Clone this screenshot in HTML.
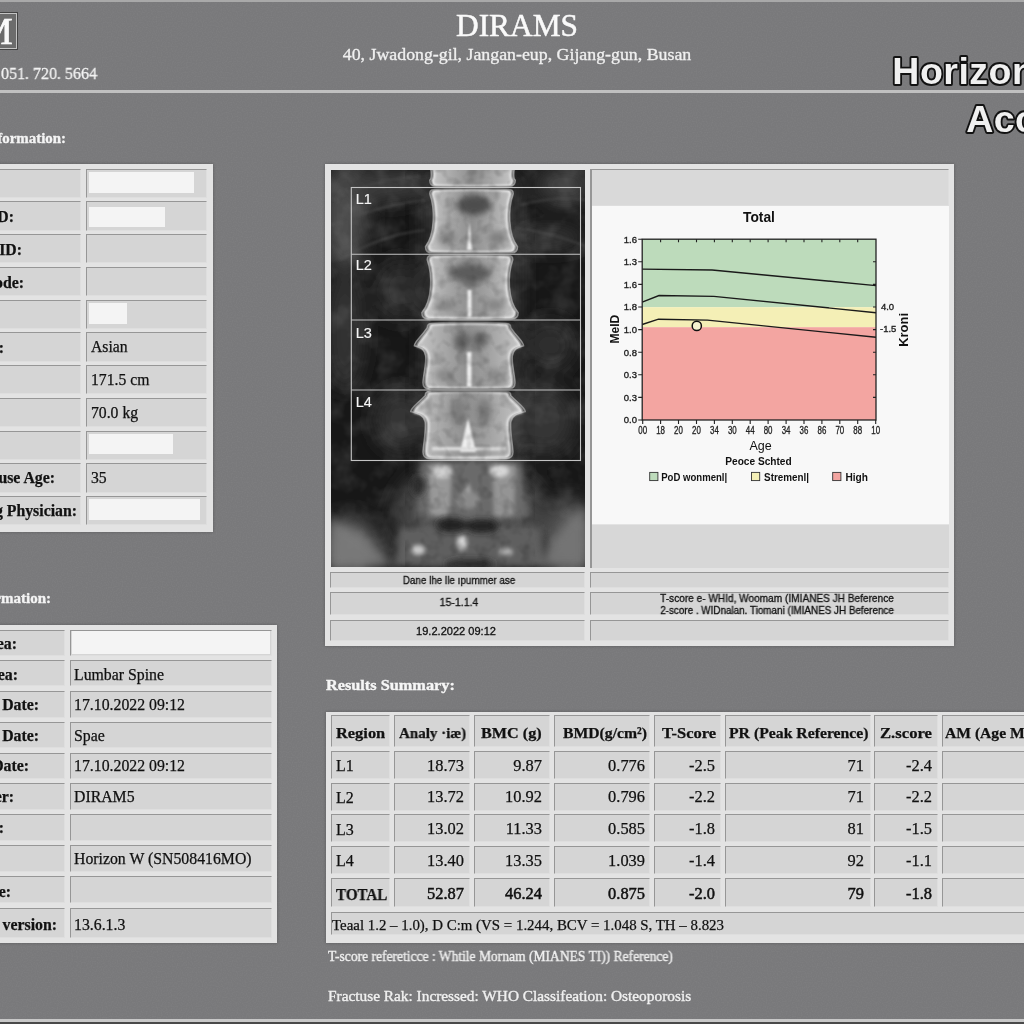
<!DOCTYPE html><html><head><meta charset="utf-8"><style>html,body{margin:0;padding:0}body{width:1024px;height:1024px;overflow:hidden;position:relative;background:#79797b}.t{will-change:transform}</style></head><body>
<svg style="position:absolute;left:0;top:0" width="1024" height="1024"><filter id="pn" x="0" y="0" width="100%" height="100%"><feTurbulence type="fractalNoise" baseFrequency="0.8" numOctaves="1" seed="11"/><feColorMatrix type="matrix" values="0 0 0 0 0.5  0 0 0 0 0.5  0 0 0 0 0.5  0 0 0 0.9 -0.35"/></filter><rect width="1024" height="1024" filter="url(#pn)" opacity="0.2"/></svg>
<div style="position:absolute;left:0.00px;top:0.00px;width:1024.00px;height:1.50px;background:#a9a9a9"></div>
<div style="position:absolute;left:0.00px;top:1019.00px;width:1024.00px;height:2.50px;background:#c8c8c8"></div>
<div style="position:absolute;left:0.00px;top:1021.50px;width:1024.00px;height:2.50px;background:#4a4a4a"></div>
<div style="position:absolute;left:0.00px;top:90.30px;width:1024.00px;height:2.70px;background:#c0c0c0"></div>
<div style="position:absolute;left:-22px;top:12px;width:40px;height:38px;box-sizing:border-box;border:1px solid #444;background:#6c6c6c"></div>
<div style="position:absolute;left:-21px;top:13px;width:38px;height:36px;box-sizing:border-box;border:1.3px solid #c4c4c4"></div>
<div class="t" style="position:absolute;left:-21.50px;top:12.18px;width:1200px;white-space:nowrap;line-height:38px;font-size:38px;font-family:'Liberation Serif', serif;font-weight:400;color:#fafafa;text-align:left;-webkit-text-stroke:0.7px #fafafa;">M</div>
<div class="t" style="position:absolute;left:1.00px;top:65.77px;width:1200px;white-space:nowrap;line-height:16.4px;font-size:16.4px;font-family:'Liberation Serif', serif;font-weight:400;color:#f2f2f2;text-align:left;transform:scaleX(0.9755);transform-origin:0 0;-webkit-text-stroke:0.3px #f2f2f2;">051. 720. 5664</div>
<div class="t" style="position:absolute;left:-83.00px;top:9.89px;width:1200px;white-space:nowrap;line-height:31.3px;font-size:31.3px;font-family:'Liberation Serif', serif;font-weight:400;color:#fafafa;text-align:center;transform:scaleX(1.0021);transform-origin:50% 0;-webkit-text-stroke:0.5px #fafafa;">DIRAMS</div>
<div class="t" style="position:absolute;left:-82.70px;top:47.05px;width:1200px;white-space:nowrap;line-height:16.3px;font-size:16.3px;font-family:'Liberation Serif', serif;font-weight:400;color:#f0f0f0;text-align:center;transform:scaleX(1.0946);transform-origin:50% 0;-webkit-text-stroke:0.3px #f0f0f0;">40, Jwadong-gil, Jangan-eup, Gijang-gun, Busan</div>
<svg style="position:absolute;left:0;top:0" width="1024" height="160" viewBox="0 0 1024 160"><g font-family="Liberation Sans, sans-serif" font-weight="700" fill="#f0f0f0" stroke="#121212" stroke-width="3.8" paint-order="stroke" stroke-linejoin="round"><text x="892.3" y="83.5" font-size="37.5" letter-spacing="0.5">Horizon</text><text x="966.2" y="131.5" font-size="37.5" letter-spacing="0.5">Acc</text></g></svg>
<div class="t" style="position:absolute;left:-1134.40px;top:130.52px;width:1200px;white-space:nowrap;line-height:14.9px;font-size:14.9px;font-family:'Liberation Serif', serif;font-weight:700;color:#f4f4f4;text-align:right;-webkit-text-stroke:0.35px #f4f4f4;">Information:</div>
<div class="t" style="position:absolute;left:-1148.70px;top:591.34px;width:1200px;white-space:nowrap;line-height:15px;font-size:15px;font-family:'Liberation Serif', serif;font-weight:700;color:#f4f4f4;text-align:right;-webkit-text-stroke:0.35px #f4f4f4;">Information:</div>
<div style="position:absolute;left:-10.00px;top:164.00px;width:222.80px;height:368.00px;background:#e3e3e3;box-shadow:0 0 3px rgba(0,0,0,0.25)"></div>
<div style="position:absolute;left:-10.00px;top:168.60px;width:91.00px;height:29.20px;background:#d5d5d5;box-sizing:border-box;border-top:1.5px solid #969696;border-left:1.5px solid #969696;border-bottom:1px solid #dedede;border-right:1px solid #dedede"></div>
<div style="position:absolute;left:86.00px;top:168.60px;width:121.20px;height:29.20px;background:#d5d5d5;box-sizing:border-box;border-top:1.5px solid #969696;border-left:1.5px solid #969696;border-bottom:1px solid #dedede;border-right:1px solid #dedede"></div>
<div style="position:absolute;left:-10.00px;top:201.35px;width:91.00px;height:29.20px;background:#d5d5d5;box-sizing:border-box;border-top:1.5px solid #969696;border-left:1.5px solid #969696;border-bottom:1px solid #dedede;border-right:1px solid #dedede"></div>
<div style="position:absolute;left:86.00px;top:201.35px;width:121.20px;height:29.20px;background:#d5d5d5;box-sizing:border-box;border-top:1.5px solid #969696;border-left:1.5px solid #969696;border-bottom:1px solid #dedede;border-right:1px solid #dedede"></div>
<div style="position:absolute;left:-10.00px;top:234.10px;width:91.00px;height:29.20px;background:#d5d5d5;box-sizing:border-box;border-top:1.5px solid #969696;border-left:1.5px solid #969696;border-bottom:1px solid #dedede;border-right:1px solid #dedede"></div>
<div style="position:absolute;left:86.00px;top:234.10px;width:121.20px;height:29.20px;background:#d5d5d5;box-sizing:border-box;border-top:1.5px solid #969696;border-left:1.5px solid #969696;border-bottom:1px solid #dedede;border-right:1px solid #dedede"></div>
<div style="position:absolute;left:-10.00px;top:266.85px;width:91.00px;height:29.20px;background:#d5d5d5;box-sizing:border-box;border-top:1.5px solid #969696;border-left:1.5px solid #969696;border-bottom:1px solid #dedede;border-right:1px solid #dedede"></div>
<div style="position:absolute;left:86.00px;top:266.85px;width:121.20px;height:29.20px;background:#d5d5d5;box-sizing:border-box;border-top:1.5px solid #969696;border-left:1.5px solid #969696;border-bottom:1px solid #dedede;border-right:1px solid #dedede"></div>
<div style="position:absolute;left:-10.00px;top:299.60px;width:91.00px;height:29.20px;background:#d5d5d5;box-sizing:border-box;border-top:1.5px solid #969696;border-left:1.5px solid #969696;border-bottom:1px solid #dedede;border-right:1px solid #dedede"></div>
<div style="position:absolute;left:86.00px;top:299.60px;width:121.20px;height:29.20px;background:#d5d5d5;box-sizing:border-box;border-top:1.5px solid #969696;border-left:1.5px solid #969696;border-bottom:1px solid #dedede;border-right:1px solid #dedede"></div>
<div style="position:absolute;left:-10.00px;top:332.35px;width:91.00px;height:29.20px;background:#d5d5d5;box-sizing:border-box;border-top:1.5px solid #969696;border-left:1.5px solid #969696;border-bottom:1px solid #dedede;border-right:1px solid #dedede"></div>
<div style="position:absolute;left:86.00px;top:332.35px;width:121.20px;height:29.20px;background:#d5d5d5;box-sizing:border-box;border-top:1.5px solid #969696;border-left:1.5px solid #969696;border-bottom:1px solid #dedede;border-right:1px solid #dedede"></div>
<div style="position:absolute;left:-10.00px;top:365.10px;width:91.00px;height:29.20px;background:#d5d5d5;box-sizing:border-box;border-top:1.5px solid #969696;border-left:1.5px solid #969696;border-bottom:1px solid #dedede;border-right:1px solid #dedede"></div>
<div style="position:absolute;left:86.00px;top:365.10px;width:121.20px;height:29.20px;background:#d5d5d5;box-sizing:border-box;border-top:1.5px solid #969696;border-left:1.5px solid #969696;border-bottom:1px solid #dedede;border-right:1px solid #dedede"></div>
<div style="position:absolute;left:-10.00px;top:397.85px;width:91.00px;height:29.20px;background:#d5d5d5;box-sizing:border-box;border-top:1.5px solid #969696;border-left:1.5px solid #969696;border-bottom:1px solid #dedede;border-right:1px solid #dedede"></div>
<div style="position:absolute;left:86.00px;top:397.85px;width:121.20px;height:29.20px;background:#d5d5d5;box-sizing:border-box;border-top:1.5px solid #969696;border-left:1.5px solid #969696;border-bottom:1px solid #dedede;border-right:1px solid #dedede"></div>
<div style="position:absolute;left:-10.00px;top:430.60px;width:91.00px;height:29.20px;background:#d5d5d5;box-sizing:border-box;border-top:1.5px solid #969696;border-left:1.5px solid #969696;border-bottom:1px solid #dedede;border-right:1px solid #dedede"></div>
<div style="position:absolute;left:86.00px;top:430.60px;width:121.20px;height:29.20px;background:#d5d5d5;box-sizing:border-box;border-top:1.5px solid #969696;border-left:1.5px solid #969696;border-bottom:1px solid #dedede;border-right:1px solid #dedede"></div>
<div style="position:absolute;left:-10.00px;top:463.35px;width:91.00px;height:29.20px;background:#d5d5d5;box-sizing:border-box;border-top:1.5px solid #969696;border-left:1.5px solid #969696;border-bottom:1px solid #dedede;border-right:1px solid #dedede"></div>
<div style="position:absolute;left:86.00px;top:463.35px;width:121.20px;height:29.20px;background:#d5d5d5;box-sizing:border-box;border-top:1.5px solid #969696;border-left:1.5px solid #969696;border-bottom:1px solid #dedede;border-right:1px solid #dedede"></div>
<div style="position:absolute;left:-10.00px;top:496.10px;width:91.00px;height:29.20px;background:#d5d5d5;box-sizing:border-box;border-top:1.5px solid #969696;border-left:1.5px solid #969696;border-bottom:1px solid #dedede;border-right:1px solid #dedede"></div>
<div style="position:absolute;left:86.00px;top:496.10px;width:121.20px;height:29.20px;background:#d5d5d5;box-sizing:border-box;border-top:1.5px solid #969696;border-left:1.5px solid #969696;border-bottom:1px solid #dedede;border-right:1px solid #dedede"></div>
<div style="position:absolute;left:89.00px;top:172.00px;width:104.70px;height:20.80px;background:#f4f4f4"></div>
<div style="position:absolute;left:89.00px;top:206.90px;width:75.80px;height:20.40px;background:#f4f4f4"></div>
<div style="position:absolute;left:89.40px;top:303.30px;width:37.70px;height:20.50px;background:#f4f4f4"></div>
<div style="position:absolute;left:89.40px;top:433.70px;width:83.60px;height:20.40px;background:#f4f4f4"></div>
<div style="position:absolute;left:89.40px;top:499.30px;width:110.60px;height:20.50px;background:#f4f4f4"></div>
<div class="t" style="position:absolute;left:-1185.60px;top:209.47px;width:1200px;white-space:nowrap;line-height:15.8px;font-size:15.8px;font-family:'Liberation Serif', serif;font-weight:700;color:#111;text-align:right;-webkit-text-stroke:0.25px #111;">Patient ID:</div>
<div class="t" style="position:absolute;left:-1178.10px;top:242.07px;width:1200px;white-space:nowrap;line-height:15.8px;font-size:15.8px;font-family:'Liberation Serif', serif;font-weight:700;color:#111;text-align:right;-webkit-text-stroke:0.25px #111;">Other ID:</div>
<div class="t" style="position:absolute;left:-1176.25px;top:274.67px;width:1200px;white-space:nowrap;line-height:15.8px;font-size:15.8px;font-family:'Liberation Serif', serif;font-weight:700;color:#111;text-align:right;-webkit-text-stroke:0.25px #111;">Zip Code:</div>
<div class="t" style="position:absolute;left:-1196.50px;top:339.87px;width:1200px;white-space:nowrap;line-height:15.8px;font-size:15.8px;font-family:'Liberation Serif', serif;font-weight:700;color:#111;text-align:right;-webkit-text-stroke:0.25px #111;">Ethnicity:</div>
<div class="t" style="position:absolute;left:-1145.00px;top:470.27px;width:1200px;white-space:nowrap;line-height:15.8px;font-size:15.8px;font-family:'Liberation Serif', serif;font-weight:700;color:#111;text-align:right;-webkit-text-stroke:0.25px #111;">Menopause Age:</div>
<div class="t" style="position:absolute;left:-1123.00px;top:502.87px;width:1200px;white-space:nowrap;line-height:15.8px;font-size:15.8px;font-family:'Liberation Serif', serif;font-weight:700;color:#111;text-align:right;-webkit-text-stroke:0.25px #111;">Referring Physician:</div>
<div class="t" style="position:absolute;left:90.70px;top:339.45px;width:1200px;white-space:nowrap;line-height:15.7px;font-size:15.7px;font-family:'Liberation Serif', serif;font-weight:400;color:#111;text-align:left;-webkit-text-stroke:0.25px #111;">Asian</div>
<div class="t" style="position:absolute;left:90.70px;top:372.05px;width:1200px;white-space:nowrap;line-height:15.7px;font-size:15.7px;font-family:'Liberation Serif', serif;font-weight:400;color:#111;text-align:left;-webkit-text-stroke:0.25px #111;">171.5 cm</div>
<div class="t" style="position:absolute;left:90.70px;top:404.65px;width:1200px;white-space:nowrap;line-height:15.7px;font-size:15.7px;font-family:'Liberation Serif', serif;font-weight:400;color:#111;text-align:left;-webkit-text-stroke:0.25px #111;">70.0 kg</div>
<div class="t" style="position:absolute;left:90.70px;top:469.85px;width:1200px;white-space:nowrap;line-height:15.7px;font-size:15.7px;font-family:'Liberation Serif', serif;font-weight:400;color:#111;text-align:left;-webkit-text-stroke:0.25px #111;">35</div>
<div style="position:absolute;left:-10.00px;top:624.70px;width:286.70px;height:318.30px;background:#e3e3e3;box-shadow:0 0 3px rgba(0,0,0,0.25)"></div>
<div style="position:absolute;left:-10.00px;top:629.80px;width:75.00px;height:25.90px;background:#d5d5d5;box-sizing:border-box;border-top:1.5px solid #969696;border-left:1.5px solid #969696;border-bottom:1px solid #dedede;border-right:1px solid #dedede"></div>
<div style="position:absolute;left:70.00px;top:629.80px;width:201.50px;height:25.90px;background:#d5d5d5;box-sizing:border-box;border-top:1.5px solid #969696;border-left:1.5px solid #969696;border-bottom:1px solid #dedede;border-right:1px solid #dedede"></div>
<div style="position:absolute;left:-10.00px;top:660.20px;width:75.00px;height:26.20px;background:#d5d5d5;box-sizing:border-box;border-top:1.5px solid #969696;border-left:1.5px solid #969696;border-bottom:1px solid #dedede;border-right:1px solid #dedede"></div>
<div style="position:absolute;left:70.00px;top:660.20px;width:201.50px;height:26.20px;background:#d5d5d5;box-sizing:border-box;border-top:1.5px solid #969696;border-left:1.5px solid #969696;border-bottom:1px solid #dedede;border-right:1px solid #dedede"></div>
<div style="position:absolute;left:-10.00px;top:691.00px;width:75.00px;height:26.50px;background:#d5d5d5;box-sizing:border-box;border-top:1.5px solid #969696;border-left:1.5px solid #969696;border-bottom:1px solid #dedede;border-right:1px solid #dedede"></div>
<div style="position:absolute;left:70.00px;top:691.00px;width:201.50px;height:26.50px;background:#d5d5d5;box-sizing:border-box;border-top:1.5px solid #969696;border-left:1.5px solid #969696;border-bottom:1px solid #dedede;border-right:1px solid #dedede"></div>
<div style="position:absolute;left:-10.00px;top:721.80px;width:75.00px;height:26.50px;background:#d5d5d5;box-sizing:border-box;border-top:1.5px solid #969696;border-left:1.5px solid #969696;border-bottom:1px solid #dedede;border-right:1px solid #dedede"></div>
<div style="position:absolute;left:70.00px;top:721.80px;width:201.50px;height:26.50px;background:#d5d5d5;box-sizing:border-box;border-top:1.5px solid #969696;border-left:1.5px solid #969696;border-bottom:1px solid #dedede;border-right:1px solid #dedede"></div>
<div style="position:absolute;left:-10.00px;top:752.50px;width:75.00px;height:26.50px;background:#d5d5d5;box-sizing:border-box;border-top:1.5px solid #969696;border-left:1.5px solid #969696;border-bottom:1px solid #dedede;border-right:1px solid #dedede"></div>
<div style="position:absolute;left:70.00px;top:752.50px;width:201.50px;height:26.50px;background:#d5d5d5;box-sizing:border-box;border-top:1.5px solid #969696;border-left:1.5px solid #969696;border-bottom:1px solid #dedede;border-right:1px solid #dedede"></div>
<div style="position:absolute;left:-10.00px;top:783.20px;width:75.00px;height:26.40px;background:#d5d5d5;box-sizing:border-box;border-top:1.5px solid #969696;border-left:1.5px solid #969696;border-bottom:1px solid #dedede;border-right:1px solid #dedede"></div>
<div style="position:absolute;left:70.00px;top:783.20px;width:201.50px;height:26.40px;background:#d5d5d5;box-sizing:border-box;border-top:1.5px solid #969696;border-left:1.5px solid #969696;border-bottom:1px solid #dedede;border-right:1px solid #dedede"></div>
<div style="position:absolute;left:-10.00px;top:813.80px;width:75.00px;height:27.20px;background:#d5d5d5;box-sizing:border-box;border-top:1.5px solid #969696;border-left:1.5px solid #969696;border-bottom:1px solid #dedede;border-right:1px solid #dedede"></div>
<div style="position:absolute;left:70.00px;top:813.80px;width:201.50px;height:27.20px;background:#d5d5d5;box-sizing:border-box;border-top:1.5px solid #969696;border-left:1.5px solid #969696;border-bottom:1px solid #dedede;border-right:1px solid #dedede"></div>
<div style="position:absolute;left:-10.00px;top:845.30px;width:75.00px;height:26.30px;background:#d5d5d5;box-sizing:border-box;border-top:1.5px solid #969696;border-left:1.5px solid #969696;border-bottom:1px solid #dedede;border-right:1px solid #dedede"></div>
<div style="position:absolute;left:70.00px;top:845.30px;width:201.50px;height:26.30px;background:#d5d5d5;box-sizing:border-box;border-top:1.5px solid #969696;border-left:1.5px solid #969696;border-bottom:1px solid #dedede;border-right:1px solid #dedede"></div>
<div style="position:absolute;left:-10.00px;top:876.10px;width:75.00px;height:27.30px;background:#d5d5d5;box-sizing:border-box;border-top:1.5px solid #969696;border-left:1.5px solid #969696;border-bottom:1px solid #dedede;border-right:1px solid #dedede"></div>
<div style="position:absolute;left:70.00px;top:876.10px;width:201.50px;height:27.30px;background:#d5d5d5;box-sizing:border-box;border-top:1.5px solid #969696;border-left:1.5px solid #969696;border-bottom:1px solid #dedede;border-right:1px solid #dedede"></div>
<div style="position:absolute;left:-10.00px;top:907.70px;width:75.00px;height:30.10px;background:#d5d5d5;box-sizing:border-box;border-top:1.5px solid #969696;border-left:1.5px solid #969696;border-bottom:1px solid #dedede;border-right:1px solid #dedede"></div>
<div style="position:absolute;left:70.00px;top:907.70px;width:201.50px;height:30.10px;background:#d5d5d5;box-sizing:border-box;border-top:1.5px solid #969696;border-left:1.5px solid #969696;border-bottom:1px solid #dedede;border-right:1px solid #dedede"></div>
<div style="position:absolute;left:71.60px;top:630.80px;width:198.20px;height:23.70px;background:#f4f4f4"></div>
<div class="t" style="position:absolute;left:-1183.00px;top:635.57px;width:1200px;white-space:nowrap;line-height:15.8px;font-size:15.8px;font-family:'Liberation Serif', serif;font-weight:700;color:#111;text-align:right;-webkit-text-stroke:0.25px #111;">Scan Area:</div>
<div class="t" style="position:absolute;left:-1182.10px;top:666.52px;width:1200px;white-space:nowrap;line-height:15.8px;font-size:15.8px;font-family:'Liberation Serif', serif;font-weight:700;color:#111;text-align:right;-webkit-text-stroke:0.25px #111;">Sub Area:</div>
<div class="t" style="position:absolute;left:-1160.70px;top:697.27px;width:1200px;white-space:nowrap;line-height:15.8px;font-size:15.8px;font-family:'Liberation Serif', serif;font-weight:700;color:#111;text-align:right;-webkit-text-stroke:0.25px #111;">Scan Date:</div>
<div class="t" style="position:absolute;left:-1160.70px;top:728.07px;width:1200px;white-space:nowrap;line-height:15.8px;font-size:15.8px;font-family:'Liberation Serif', serif;font-weight:700;color:#111;text-align:right;-webkit-text-stroke:0.25px #111;">Analysis Date:</div>
<div class="t" style="position:absolute;left:-1171.40px;top:758.27px;width:1200px;white-space:nowrap;line-height:15.8px;font-size:15.8px;font-family:'Liberation Serif', serif;font-weight:700;color:#111;text-align:right;-webkit-text-stroke:0.25px #111;">Update Date:</div>
<div class="t" style="position:absolute;left:-1186.00px;top:789.17px;width:1200px;white-space:nowrap;line-height:15.8px;font-size:15.8px;font-family:'Liberation Serif', serif;font-weight:700;color:#111;text-align:right;-webkit-text-stroke:0.25px #111;">Technologer:</div>
<div class="t" style="position:absolute;left:-1196.00px;top:820.27px;width:1200px;white-space:nowrap;line-height:15.8px;font-size:15.8px;font-family:'Liberation Serif', serif;font-weight:700;color:#111;text-align:right;-webkit-text-stroke:0.25px #111;">Model:</div>
<div class="t" style="position:absolute;left:-1189.30px;top:884.27px;width:1200px;white-space:nowrap;line-height:15.8px;font-size:15.8px;font-family:'Liberation Serif', serif;font-weight:700;color:#111;text-align:right;-webkit-text-stroke:0.25px #111;">Technique:</div>
<div class="t" style="position:absolute;left:-1143.00px;top:917.07px;width:1200px;white-space:nowrap;line-height:15.8px;font-size:15.8px;font-family:'Liberation Serif', serif;font-weight:700;color:#111;text-align:right;-webkit-text-stroke:0.25px #111;">Software version:</div>
<div class="t" style="position:absolute;left:74.30px;top:666.52px;width:1200px;white-space:nowrap;line-height:15.8px;font-size:15.8px;font-family:'Liberation Serif', serif;font-weight:400;color:#111;text-align:left;-webkit-text-stroke:0.25px #111;">Lumbar Spine</div>
<div class="t" style="position:absolute;left:74.30px;top:697.27px;width:1200px;white-space:nowrap;line-height:15.8px;font-size:15.8px;font-family:'Liberation Serif', serif;font-weight:400;color:#111;text-align:left;-webkit-text-stroke:0.25px #111;">17.10.2022 09:12</div>
<div class="t" style="position:absolute;left:74.30px;top:728.07px;width:1200px;white-space:nowrap;line-height:15.8px;font-size:15.8px;font-family:'Liberation Serif', serif;font-weight:400;color:#111;text-align:left;-webkit-text-stroke:0.25px #111;">Spae</div>
<div class="t" style="position:absolute;left:74.30px;top:758.27px;width:1200px;white-space:nowrap;line-height:15.8px;font-size:15.8px;font-family:'Liberation Serif', serif;font-weight:400;color:#111;text-align:left;-webkit-text-stroke:0.25px #111;">17.10.2022 09:12</div>
<div class="t" style="position:absolute;left:74.30px;top:789.17px;width:1200px;white-space:nowrap;line-height:15.8px;font-size:15.8px;font-family:'Liberation Serif', serif;font-weight:400;color:#111;text-align:left;-webkit-text-stroke:0.25px #111;">DIRAM5</div>
<div class="t" style="position:absolute;left:74.30px;top:851.47px;width:1200px;white-space:nowrap;line-height:15.8px;font-size:15.8px;font-family:'Liberation Serif', serif;font-weight:400;color:#111;text-align:left;-webkit-text-stroke:0.25px #111;">Horizon W (SN508416MO)</div>
<div class="t" style="position:absolute;left:74.30px;top:917.07px;width:1200px;white-space:nowrap;line-height:15.8px;font-size:15.8px;font-family:'Liberation Serif', serif;font-weight:400;color:#111;text-align:left;-webkit-text-stroke:0.25px #111;">13.6.1.3</div>
<div style="position:absolute;left:325.00px;top:164.00px;width:628.80px;height:481.50px;background:#e3e3e3;box-shadow:0 0 3px rgba(0,0,0,0.25)"></div>
<svg style="position:absolute;left:331px;top:170px" width="254" height="396.7" viewBox="331 170 254 396.7"><defs><filter id="b06" x="-20%" y="-20%" width="140%" height="140%"><feGaussianBlur stdDeviation="0.6"/></filter><filter id="b1" x="-20%" y="-20%" width="140%" height="140%"><feGaussianBlur stdDeviation="1.2"/></filter><filter id="b3" x="-50%" y="-50%" width="200%" height="200%"><feGaussianBlur stdDeviation="3"/></filter><filter id="b2" x="-50%" y="-50%" width="200%" height="200%"><feGaussianBlur stdDeviation="2.2"/></filter><filter id="b5" x="-50%" y="-50%" width="200%" height="200%"><feGaussianBlur stdDeviation="5"/></filter><filter id="b10" x="-50%" y="-50%" width="200%" height="200%"><feGaussianBlur stdDeviation="10"/></filter><filter id="nz" x="0" y="0" width="100%" height="100%"><feTurbulence type="fractalNoise" baseFrequency="0.045" numOctaves="3" seed="7"/><feColorMatrix type="matrix" values="0 0 0 0 1  0 0 0 0 1  0 0 0 0 1  0.9 0 0 0 -0.38"/></filter><filter id="nz2" x="0" y="0" width="100%" height="100%"><feTurbulence type="fractalNoise" baseFrequency="0.09" numOctaves="2" seed="3"/><feColorMatrix type="matrix" values="0 0 0 0 0  0 0 0 0 0  0 0 0 0 0  1.0 0 0 0 -0.45"/></filter><linearGradient id="vg" x1="0" x2="1" y1="0" y2="0"><stop offset="0" stop-color="#c6c6c6"/><stop offset="0.25" stop-color="#a8a8a8"/><stop offset="0.5" stop-color="#8e8e8e"/><stop offset="0.75" stop-color="#a8a8a8"/><stop offset="1" stop-color="#c6c6c6"/></linearGradient></defs><rect x="331" y="170" width="254" height="397" fill="#171717"/><g filter="url(#b10)"><ellipse cx="345" cy="215" rx="22" ry="55" fill="#4e4e4e"/><ellipse cx="385" cy="185" rx="45" ry="16" fill="#3e3e3e"/><ellipse cx="345" cy="330" rx="18" ry="60" fill="#343434"/><ellipse cx="400" cy="290" rx="25" ry="30" fill="#2c2c2c"/><ellipse cx="565" cy="185" rx="30" ry="20" fill="#3c3c3c"/><ellipse cx="545" cy="238" rx="40" ry="8" fill="#444"/><ellipse cx="400" cy="420" rx="25" ry="30" fill="#343434"/><ellipse cx="545" cy="420" rx="30" ry="35" fill="#363636"/><ellipse cx="550" cy="345" rx="25" ry="25" fill="#2e2e2e"/><ellipse cx="350" cy="548" rx="28" ry="30" fill="#666"/><ellipse cx="570" cy="540" rx="25" ry="40" fill="#5a5a5a"/><ellipse cx="470" cy="515" rx="75" ry="55" fill="#4a4a4a"/><rect x="425" y="170" width="95" height="397" fill="#383838"/></g><g stroke="#4a4a4a" stroke-width="2.5" fill="none" filter="url(#b1)" opacity="0.5"><path d="M333,200 Q370,180 420,176"/><path d="M333,225 Q380,205 425,200"/><path d="M340,260 Q380,235 425,230"/><path d="M515,228 Q550,232 585,246"/><path d="M520,205 Q560,195 585,200"/></g><rect x="331" y="170" width="254" height="397" filter="url(#nz)" opacity="0.26"/><g filter="url(#b3)"><path d="M420,462 Q470,456 522,462 L528,518 Q470,526 416,518 Z" fill="#6a6a6a"/><path d="M400,528 Q470,516 540,528 L546,566 L394,566 Z" fill="#5e5e5e"/></g><g filter="url(#b2)"><path d="M428,466 Q440,462 452,466 L450,515 Q440,518 430,514 Z" fill="#989898"/><path d="M492,466 Q504,462 516,466 L514,514 Q504,518 494,515 Z" fill="#949494"/><ellipse cx="442" cy="472" rx="10" ry="6" fill="#d0d0d0"/><ellipse cx="499" cy="471" rx="10" ry="6" fill="#d8d8d8"/><path d="M463,505 L468,482 L474,505 Z" fill="#c8c8c8"/><ellipse cx="468" cy="500" rx="12" ry="9" fill="#8a8a8a"/><ellipse cx="418" cy="550" rx="7" ry="5" fill="#c8c8c8"/><ellipse cx="462" cy="543" rx="5" ry="8" fill="#d4d4d4"/><ellipse cx="506" cy="552" rx="7" ry="4" fill="#b4b4b4"/></g><g filter="url(#b3)"><ellipse cx="452" cy="525" rx="16" ry="7" fill="#202020"/><ellipse cx="482" cy="526" rx="16" ry="7" fill="#202020"/><ellipse cx="470" cy="564" rx="25" ry="5" fill="#2a2a2a"/><ellipse cx="418" cy="486" rx="6" ry="10" fill="#2a2a2a"/></g><g filter="url(#b5)" opacity="0.9"><path d="M331,520 Q360,530 395,566 L331,566Z" fill="#7a7a7a"/><path d="M585,505 Q555,530 540,566 L585,566Z" fill="#777"/></g><path d="M436.5,163 C462.5,161 482.5,161 508.5,163 Q512.5,163 512.5,167 C510.5,169.9 510.5,179.1 512.5,180 Q512.5,186 506.5,186 C482.5,187 462.5,187 438.5,186 Q432.5,186 432.5,180 C434.5,179.1 434.5,169.9 432.5,167 Q432.5,163 436.5,163Z" fill="url(#vg)" filter="url(#b06)"/><path d="M436.5,163 C462.5,161 482.5,161 508.5,163 Q512.5,163 512.5,167 C510.5,169.9 510.5,179.1 512.5,180 Q512.5,186 506.5,186 C482.5,187 462.5,187 438.5,186 Q432.5,186 432.5,180 C434.5,179.1 434.5,169.9 432.5,167 Q432.5,163 436.5,163Z" fill="none" stroke="#8c8c8c" stroke-width="1.4" transform="translate(472.5,174.5) scale(1.07,1.03) translate(-472.5,-174.5)" filter="url(#b06)"/><path d="M436.5,163 C462.5,161 482.5,161 508.5,163 Q512.5,163 512.5,167 C510.5,169.9 510.5,179.1 512.5,180 Q512.5,186 506.5,186 C482.5,187 462.5,187 438.5,186 Q432.5,186 432.5,180 C434.5,179.1 434.5,169.9 432.5,167 Q432.5,163 436.5,163Z" fill="none" stroke="#e4e4e4" stroke-width="2.8" filter="url(#b1)"/><path d="M436.5,190.5 C461.5,188.5 481.5,188.5 506.5,190.5 Q510.5,190.5 510.5,194.5 C505.5,208.95 505.5,233.55 514.5,246 Q514.5,252 508.5,252 C481.5,253 461.5,253 434.5,252 Q428.5,252 428.5,246 C437.5,233.55 437.5,208.95 432.5,194.5 Q432.5,190.5 436.5,190.5Z" fill="url(#vg)" filter="url(#b06)"/><path d="M436.5,190.5 C461.5,188.5 481.5,188.5 506.5,190.5 Q510.5,190.5 510.5,194.5 C505.5,208.95 505.5,233.55 514.5,246 Q514.5,252 508.5,252 C481.5,253 461.5,253 434.5,252 Q428.5,252 428.5,246 C437.5,233.55 437.5,208.95 432.5,194.5 Q432.5,190.5 436.5,190.5Z" fill="none" stroke="#8c8c8c" stroke-width="1.4" transform="translate(471.5,221.25) scale(1.07,1.03) translate(-471.5,-221.25)" filter="url(#b06)"/><path d="M436.5,190.5 C461.5,188.5 481.5,188.5 506.5,190.5 Q510.5,190.5 510.5,194.5 C505.5,208.95 505.5,233.55 514.5,246 Q514.5,252 508.5,252 C481.5,253 461.5,253 434.5,252 Q428.5,252 428.5,246 C437.5,233.55 437.5,208.95 432.5,194.5 Q432.5,190.5 436.5,190.5Z" fill="none" stroke="#e4e4e4" stroke-width="2.8" filter="url(#b1)"/><path d="M434,256.5 C460,254.5 480,254.5 506,256.5 Q510,256.5 510,260.5 C505,274.95 505,299.55 515,312 Q515,318 509,318 C480,319 460,319 431,318 Q425,318 425,312 C435,299.55 435,274.95 430,260.5 Q430,256.5 434,256.5Z" fill="url(#vg)" filter="url(#b06)"/><path d="M434,256.5 C460,254.5 480,254.5 506,256.5 Q510,256.5 510,260.5 C505,274.95 505,299.55 515,312 Q515,318 509,318 C480,319 460,319 431,318 Q425,318 425,312 C435,299.55 435,274.95 430,260.5 Q430,256.5 434,256.5Z" fill="none" stroke="#8c8c8c" stroke-width="1.4" transform="translate(470,287.25) scale(1.07,1.03) translate(-470,-287.25)" filter="url(#b06)"/><path d="M434,256.5 C460,254.5 480,254.5 506,256.5 Q510,256.5 510,260.5 C505,274.95 505,299.55 515,312 Q515,318 509,318 C480,319 460,319 431,318 Q425,318 425,312 C435,299.55 435,274.95 430,260.5 Q430,256.5 434,256.5Z" fill="none" stroke="#e4e4e4" stroke-width="2.8" filter="url(#b1)"/><path d="M434,324.4 C459,322.4 479,322.4 504,324.4 Q508,324.4 508,328.4 C514.0,338 520,342 520,346 C512.8,348 510.5,350 509.5,356 C508.5,362.2 512,376 512,382 Q512,388 506,388 C479,389 459,389 432,388 Q426,388 426,382 C426,376 429.5,362.2 428.5,356 C427.5,350 425.2,348 418,346 C418,342 424.0,338 430,328.4 Q430,324.4 434,324.4Z" fill="url(#vg)" filter="url(#b06)"/><path d="M434,324.4 C459,322.4 479,322.4 504,324.4 Q508,324.4 508,328.4 C514.0,338 520,342 520,346 C512.8,348 510.5,350 509.5,356 C508.5,362.2 512,376 512,382 Q512,388 506,388 C479,389 459,389 432,388 Q426,388 426,382 C426,376 429.5,362.2 428.5,356 C427.5,350 425.2,348 418,346 C418,342 424.0,338 430,328.4 Q430,324.4 434,324.4Z" fill="none" stroke="#8c8c8c" stroke-width="1.4" transform="translate(469,356.2) scale(1.07,1.03) translate(-469,-356.2)" filter="url(#b06)"/><path d="M434,324.4 C459,322.4 479,322.4 504,324.4 Q508,324.4 508,328.4 C514.0,338 520,342 520,346 C512.8,348 510.5,350 509.5,356 C508.5,362.2 512,376 512,382 Q512,388 506,388 C479,389 459,389 432,388 Q426,388 426,382 C426,376 429.5,362.2 428.5,356 C427.5,350 425.2,348 418,346 C418,342 424.0,338 430,328.4 Q430,324.4 434,324.4Z" fill="none" stroke="#e4e4e4" stroke-width="2.8" filter="url(#b1)"/><path d="M432,392.5 C458,390.5 478,390.5 504,392.5 Q508,392.5 508,396.5 C514.75,404 521.5,408 521.5,412 C513.4,414 509,416 508,422 C507,431.0 510,445.5 510,451.5 Q510,457.5 504,457.5 C478,458.5 458,458.5 432,457.5 Q426,457.5 426,451.5 C426,445.5 429,431.0 428,422 C427,416 422.6,414 414.5,412 C414.5,408 421.25,404 428,396.5 Q428,392.5 432,392.5Z" fill="url(#vg)" filter="url(#b06)"/><path d="M432,392.5 C458,390.5 478,390.5 504,392.5 Q508,392.5 508,396.5 C514.75,404 521.5,408 521.5,412 C513.4,414 509,416 508,422 C507,431.0 510,445.5 510,451.5 Q510,457.5 504,457.5 C478,458.5 458,458.5 432,457.5 Q426,457.5 426,451.5 C426,445.5 429,431.0 428,422 C427,416 422.6,414 414.5,412 C414.5,408 421.25,404 428,396.5 Q428,392.5 432,392.5Z" fill="none" stroke="#8c8c8c" stroke-width="1.4" transform="translate(468,425.0) scale(1.07,1.03) translate(-468,-425.0)" filter="url(#b06)"/><path d="M432,392.5 C458,390.5 478,390.5 504,392.5 Q508,392.5 508,396.5 C514.75,404 521.5,408 521.5,412 C513.4,414 509,416 508,422 C507,431.0 510,445.5 510,451.5 Q510,457.5 504,457.5 C478,458.5 458,458.5 432,457.5 Q426,457.5 426,451.5 C426,445.5 429,431.0 428,422 C427,416 422.6,414 414.5,412 C414.5,408 421.25,404 428,396.5 Q428,392.5 432,392.5Z" fill="none" stroke="#e4e4e4" stroke-width="2.8" filter="url(#b1)"/><g filter="url(#b3)"><ellipse cx="474" cy="205" rx="17" ry="10" fill="#4e4e4e"/><ellipse cx="470" cy="273" rx="21" ry="9" fill="#5c5c5c"/><ellipse cx="462" cy="341" rx="8" ry="9" fill="#5e5e5e"/><ellipse cx="480" cy="340" rx="7" ry="8" fill="#5e5e5e"/><ellipse cx="458" cy="412" rx="8" ry="14" fill="#7e7e7e"/><ellipse cx="484" cy="412" rx="8" ry="14" fill="#7e7e7e"/><ellipse cx="447" cy="238" rx="9" ry="7" fill="#808080"/><ellipse cx="497" cy="238" rx="9" ry="7" fill="#808080"/><ellipse cx="447" cy="305" rx="10" ry="6" fill="#858585"/><ellipse cx="495" cy="305" rx="10" ry="6" fill="#858585"/><ellipse cx="445" cy="375" rx="10" ry="6" fill="#888"/><ellipse cx="495" cy="375" rx="10" ry="6" fill="#888"/></g><g filter="url(#b1)" fill="#eeeeee"><path d="M467,250 L469.5,222 L472,250Z"/><rect x="467.5" y="290" width="4" height="27"/><rect x="467" y="352" width="4.5" height="35"/><path d="M460,452 L468,418 L476,452 Z"/><rect x="432" y="447" width="74" height="3.5" fill="#dcdcdc"/></g><rect x="405" y="170" width="130" height="397" filter="url(#nz2)" opacity="0.42"/><g fill="#161616" filter="url(#b1)" opacity="0.9"><rect x="430" y="187" width="84" height="2"/><rect x="430" y="253" width="84" height="2"/><rect x="430" y="320" width="84" height="2.5"/><rect x="430" y="389" width="84" height="2.5"/></g><g fill="none" stroke="#c4c4c4" stroke-width="1.1"><rect x="351.3" y="187.5" width="229.2" height="273"/><path d="M351.3,254.2H580.5 M351.3,320H580.5 M351.3,390H580.5"/></g><g font-family="Liberation Sans, sans-serif" font-size="14.5" fill="#f4f4f4" stroke="#f4f4f4" stroke-width="0.15"><text x="355.8" y="204.4">L1</text><text x="355.8" y="270.5">L2</text><text x="355.8" y="338">L3</text><text x="355.8" y="406.8">L4</text></g></svg>
<div style="position:absolute;left:590.00px;top:169.20px;width:359.00px;height:37.10px;background:#d9d9d9;box-sizing:border-box;border-top:1.5px solid #969696;border-left:1.5px solid #969696;border-bottom:1px solid #dedede;border-right:1px solid #dedede"></div>
<div style="position:absolute;left:591.50px;top:206.30px;width:357.50px;height:318.20px;background:#f8f8f8"></div>
<div style="position:absolute;left:591.50px;top:524.50px;width:357.50px;height:43.80px;background:#d7d7d7"></div>
<div style="position:absolute;left:590.00px;top:169.20px;width:1.50px;height:399.10px;background:#969696"></div>
<div style="position:absolute;left:330.00px;top:572.30px;width:255.00px;height:15.70px;background:#d5d5d5;box-sizing:border-box;border-top:1.5px solid #969696;border-left:1.5px solid #969696;border-bottom:1px solid #dedede;border-right:1px solid #dedede"></div>
<div style="position:absolute;left:590.00px;top:572.30px;width:359.00px;height:15.70px;background:#d5d5d5;box-sizing:border-box;border-top:1.5px solid #969696;border-left:1.5px solid #969696;border-bottom:1px solid #dedede;border-right:1px solid #dedede"></div>
<div style="position:absolute;left:330.00px;top:592.30px;width:255.00px;height:23.20px;background:#d5d5d5;box-sizing:border-box;border-top:1.5px solid #969696;border-left:1.5px solid #969696;border-bottom:1px solid #dedede;border-right:1px solid #dedede"></div>
<div style="position:absolute;left:590.00px;top:592.30px;width:359.00px;height:23.20px;background:#d5d5d5;box-sizing:border-box;border-top:1.5px solid #969696;border-left:1.5px solid #969696;border-bottom:1px solid #dedede;border-right:1px solid #dedede"></div>
<div style="position:absolute;left:330.00px;top:620.30px;width:255.00px;height:20.90px;background:#d5d5d5;box-sizing:border-box;border-top:1.5px solid #969696;border-left:1.5px solid #969696;border-bottom:1px solid #dedede;border-right:1px solid #dedede"></div>
<div style="position:absolute;left:590.00px;top:620.30px;width:359.00px;height:20.90px;background:#d5d5d5;box-sizing:border-box;border-top:1.5px solid #969696;border-left:1.5px solid #969696;border-bottom:1px solid #dedede;border-right:1px solid #dedede"></div>
<div class="t" style="position:absolute;left:-141.30px;top:575.31px;width:1200px;white-space:nowrap;line-height:10.5px;font-size:10.5px;font-family:'Liberation Sans', sans-serif;font-weight:400;color:#111;text-align:center;transform:scaleX(0.9398);transform-origin:50% 0;-webkit-text-stroke:0.3px #111;">Dane lhe lle ıpummer ase</div>
<div class="t" style="position:absolute;left:-140.60px;top:597.29px;width:1200px;white-space:nowrap;line-height:11px;font-size:11px;font-family:'Liberation Sans', sans-serif;font-weight:400;color:#111;text-align:center;transform:scaleX(0.9590);transform-origin:50% 0;-webkit-text-stroke:0.3px #111;">15-1.1.4</div>
<div class="t" style="position:absolute;left:-143.80px;top:625.69px;width:1200px;white-space:nowrap;line-height:11px;font-size:11px;font-family:'Liberation Sans', sans-serif;font-weight:400;color:#111;text-align:center;transform:scaleX(1.0047);transform-origin:50% 0;-webkit-text-stroke:0.3px #111;">19.2.2022 09:12</div>
<div class="t" style="position:absolute;left:176.70px;top:594.27px;width:1200px;white-space:nowrap;line-height:10.2px;font-size:10.2px;font-family:'Liberation Sans', sans-serif;font-weight:400;color:#111;text-align:center;transform:scaleX(0.9906);transform-origin:50% 0;-webkit-text-stroke:0.3px #111;">T-score e- WHId, Woomam (IMIANES JH Beference</div>
<div class="t" style="position:absolute;left:176.70px;top:605.97px;width:1200px;white-space:nowrap;line-height:10.2px;font-size:10.2px;font-family:'Liberation Sans', sans-serif;font-weight:400;color:#111;text-align:center;transform:scaleX(0.9687);transform-origin:50% 0;-webkit-text-stroke:0.3px #111;">2-score . WIDnalan. Tiomani (IMIANES JH Beference</div>
<svg style="position:absolute;left:591.5px;top:206.3px" width="357.5" height="318.2" viewBox="591.5 206.3 357.5 318.2"><rect x="641.7" y="239.5" width="233.79999999999995" height="68.0" fill="#bddbbb"/><rect x="641.7" y="307.5" width="233.79999999999995" height="20" fill="#f4efb6"/><rect x="641.7" y="327.5" width="233.79999999999995" height="92.80000000000001" fill="#f3a5a1"/><g fill="none" stroke="#1a1a1a" stroke-width="1.4"><polyline points="641.7,269.4 711.6,270.3 875.5,285.9"/><polyline points="641.7,302.5 658.5,295.8 713.4,296.7 875.5,313"/><polyline points="641.7,324.8 658,319.5 707,320.4 875.5,337.6"/></g><circle cx="696.3" cy="326.2" r="4.6" fill="#f6f2d0" stroke="#111" stroke-width="1.5"/><rect x="641.7" y="239.5" width="233.79999999999995" height="180.8" fill="none" stroke="#222" stroke-width="1.3"/><path d="M637.7,239.5H641.7 M637.7,262.1H641.7 M637.7,284.7H641.7 M637.7,307.3H641.7 M637.7,329.9H641.7 M637.7,352.5H641.7 M637.7,375.1H641.7 M637.7,397.7H641.7 M637.7,420.3H641.7 M872.5,262.1H875.5 M872.5,284.7H875.5 M872.5,307.3H875.5 M872.5,329.9H875.5 M872.5,352.5H875.5 M872.5,375.1H875.5 M872.5,397.7H875.5 M642.2,420.3V424.3 M660.1,420.3V424.3 M660.1,239.5V242.5 M678.0,420.3V424.3 M678.0,239.5V242.5 M696.0,420.3V424.3 M696.0,239.5V242.5 M713.9,420.3V424.3 M713.9,239.5V242.5 M731.8,420.3V424.3 M731.8,239.5V242.5 M749.7,420.3V424.3 M749.7,239.5V242.5 M767.6,420.3V424.3 M767.6,239.5V242.5 M785.6,420.3V424.3 M785.6,239.5V242.5 M803.5,420.3V424.3 M803.5,239.5V242.5 M821.4,420.3V424.3 M821.4,239.5V242.5 M839.3,420.3V424.3 M839.3,239.5V242.5 M857.2,420.3V424.3 M857.2,239.5V242.5 M875.2,420.3V424.3" stroke="#222" stroke-width="1.1" fill="none"/><g font-family="Liberation Sans, sans-serif" font-size="9.5" fill="#222" stroke="#222" stroke-width="0.35" text-anchor="end"><text x="636.5" y="242.9">1.6</text><text x="636.5" y="265.5">1.3</text><text x="636.5" y="288.1">1.6</text><text x="636.5" y="310.7">1.8</text><text x="636.5" y="333.3">1.0</text><text x="636.5" y="355.9">0.8</text><text x="636.5" y="378.5">0.3</text><text x="636.5" y="401.1">0.3</text><text x="636.5" y="423.7">0.0</text></g><g font-family="Liberation Sans, sans-serif" font-size="10" fill="#222" stroke="#222" stroke-width="0.3"><text x="637.8" y="434.2" textLength="8.8" lengthAdjust="spacingAndGlyphs">00</text><text x="655.7" y="434.2" textLength="8.8" lengthAdjust="spacingAndGlyphs">18</text><text x="673.6" y="434.2" textLength="8.8" lengthAdjust="spacingAndGlyphs">20</text><text x="691.6" y="434.2" textLength="8.8" lengthAdjust="spacingAndGlyphs">20</text><text x="709.5" y="434.2" textLength="8.8" lengthAdjust="spacingAndGlyphs">34</text><text x="727.4" y="434.2" textLength="8.8" lengthAdjust="spacingAndGlyphs">30</text><text x="745.3" y="434.2" textLength="8.8" lengthAdjust="spacingAndGlyphs">44</text><text x="763.2" y="434.2" textLength="8.8" lengthAdjust="spacingAndGlyphs">80</text><text x="781.2" y="434.2" textLength="8.8" lengthAdjust="spacingAndGlyphs">34</text><text x="799.1" y="434.2" textLength="8.8" lengthAdjust="spacingAndGlyphs">36</text><text x="817.0" y="434.2" textLength="8.8" lengthAdjust="spacingAndGlyphs">86</text><text x="834.9" y="434.2" textLength="8.8" lengthAdjust="spacingAndGlyphs">70</text><text x="852.8" y="434.2" textLength="8.8" lengthAdjust="spacingAndGlyphs">88</text><text x="870.8" y="434.2" textLength="8.8" lengthAdjust="spacingAndGlyphs">10</text></g><g font-family="Liberation Sans, sans-serif" font-size="9.5" fill="#222" stroke="#222" stroke-width="0.35"><text x="880.4" y="310.8">4.0</text><text x="879.5" y="331.9">-1.5</text></g><text x="758.5" y="222.5" font-family="Liberation Sans, sans-serif" font-size="13.8" font-weight="700" fill="#111" text-anchor="middle">Total</text><text x="760" y="450.8" font-family="Liberation Sans, sans-serif" font-size="12.5" fill="#111" text-anchor="middle">Age</text><text x="758" y="465.6" font-family="Liberation Sans, sans-serif" font-size="10.5" font-weight="700" fill="#111" text-anchor="middle" textLength="66.4" lengthAdjust="spacingAndGlyphs">Peoce Schted</text><text transform="translate(618,329.5) rotate(-90)" font-family="Liberation Sans, sans-serif" font-size="12" font-weight="700" fill="#111" text-anchor="middle">MeID</text><text transform="translate(908,330.2) rotate(-90)" font-family="Liberation Sans, sans-serif" font-size="13" font-weight="700" fill="#111" text-anchor="middle">Kroni</text><rect x="649.2" y="472.7" width="8.2" height="8.2" fill="#bddbbb" stroke="#333" stroke-width="0.9"/><rect x="751" y="472.7" width="8.2" height="8.2" fill="#f4efb6" stroke="#333" stroke-width="0.9"/><rect x="832.2" y="472.7" width="8.2" height="8.2" fill="#f3a5a1" stroke="#333" stroke-width="0.9"/><g font-family="Liberation Sans, sans-serif" font-size="10.5" font-weight="700" fill="#111"><text x="660.7" y="481" textLength="66" lengthAdjust="spacingAndGlyphs">PoD wonmenl|</text><text x="763.6" y="481" textLength="45" lengthAdjust="spacingAndGlyphs">Stremenl|</text><text x="845" y="481" textLength="22.5" lengthAdjust="spacingAndGlyphs">High</text></g></svg>
<div class="t" style="position:absolute;left:326.20px;top:678.29px;width:1200px;white-space:nowrap;line-height:14.7px;font-size:14.7px;font-family:'Liberation Serif', serif;font-weight:700;color:#f6f6f6;text-align:left;transform:scaleX(1.1077);transform-origin:0 0;-webkit-text-stroke:0.35px #f6f6f6;">Results Summary:</div>
<div style="position:absolute;left:326.4px;top:711.5px;width:710px;height:231.1px;background:#e3e3e3;box-shadow:0 0 3px rgba(0,0,0,0.25)"></div>
<div style="position:absolute;left:330.70px;top:715.30px;width:59.30px;height:31.30px;background:#d5d5d5;box-sizing:border-box;border-top:1.5px solid #969696;border-left:1.5px solid #969696;border-bottom:1px solid #dedede;border-right:1px solid #dedede"></div>
<div style="position:absolute;left:394.00px;top:715.30px;width:76.40px;height:31.30px;background:#d5d5d5;box-sizing:border-box;border-top:1.5px solid #969696;border-left:1.5px solid #969696;border-bottom:1px solid #dedede;border-right:1px solid #dedede"></div>
<div style="position:absolute;left:473.80px;top:715.30px;width:76.40px;height:31.30px;background:#d5d5d5;box-sizing:border-box;border-top:1.5px solid #969696;border-left:1.5px solid #969696;border-bottom:1px solid #dedede;border-right:1px solid #dedede"></div>
<div style="position:absolute;left:553.80px;top:715.30px;width:96.20px;height:31.30px;background:#d5d5d5;box-sizing:border-box;border-top:1.5px solid #969696;border-left:1.5px solid #969696;border-bottom:1px solid #dedede;border-right:1px solid #dedede"></div>
<div style="position:absolute;left:653.60px;top:715.30px;width:67.40px;height:31.30px;background:#d5d5d5;box-sizing:border-box;border-top:1.5px solid #969696;border-left:1.5px solid #969696;border-bottom:1px solid #dedede;border-right:1px solid #dedede"></div>
<div style="position:absolute;left:725.00px;top:715.30px;width:146.00px;height:31.30px;background:#d5d5d5;box-sizing:border-box;border-top:1.5px solid #969696;border-left:1.5px solid #969696;border-bottom:1px solid #dedede;border-right:1px solid #dedede"></div>
<div style="position:absolute;left:874.40px;top:715.30px;width:63.80px;height:31.30px;background:#d5d5d5;box-sizing:border-box;border-top:1.5px solid #969696;border-left:1.5px solid #969696;border-bottom:1px solid #dedede;border-right:1px solid #dedede"></div>
<div style="position:absolute;left:942.00px;top:715.30px;width:98.00px;height:31.30px;background:#d5d5d5;box-sizing:border-box;border-top:1.5px solid #969696;border-left:1.5px solid #969696;border-bottom:1px solid #dedede;border-right:1px solid #dedede"></div>
<div style="position:absolute;left:330.70px;top:750.70px;width:59.30px;height:28.00px;background:#d5d5d5;box-sizing:border-box;border-top:1.5px solid #969696;border-left:1.5px solid #969696;border-bottom:1px solid #dedede;border-right:1px solid #dedede"></div>
<div style="position:absolute;left:394.00px;top:750.70px;width:76.40px;height:28.00px;background:#d5d5d5;box-sizing:border-box;border-top:1.5px solid #969696;border-left:1.5px solid #969696;border-bottom:1px solid #dedede;border-right:1px solid #dedede"></div>
<div style="position:absolute;left:473.80px;top:750.70px;width:76.40px;height:28.00px;background:#d5d5d5;box-sizing:border-box;border-top:1.5px solid #969696;border-left:1.5px solid #969696;border-bottom:1px solid #dedede;border-right:1px solid #dedede"></div>
<div style="position:absolute;left:553.80px;top:750.70px;width:96.20px;height:28.00px;background:#d5d5d5;box-sizing:border-box;border-top:1.5px solid #969696;border-left:1.5px solid #969696;border-bottom:1px solid #dedede;border-right:1px solid #dedede"></div>
<div style="position:absolute;left:653.60px;top:750.70px;width:67.40px;height:28.00px;background:#d5d5d5;box-sizing:border-box;border-top:1.5px solid #969696;border-left:1.5px solid #969696;border-bottom:1px solid #dedede;border-right:1px solid #dedede"></div>
<div style="position:absolute;left:725.00px;top:750.70px;width:146.00px;height:28.00px;background:#d5d5d5;box-sizing:border-box;border-top:1.5px solid #969696;border-left:1.5px solid #969696;border-bottom:1px solid #dedede;border-right:1px solid #dedede"></div>
<div style="position:absolute;left:874.40px;top:750.70px;width:63.80px;height:28.00px;background:#d5d5d5;box-sizing:border-box;border-top:1.5px solid #969696;border-left:1.5px solid #969696;border-bottom:1px solid #dedede;border-right:1px solid #dedede"></div>
<div style="position:absolute;left:942.00px;top:750.70px;width:98.00px;height:28.00px;background:#d5d5d5;box-sizing:border-box;border-top:1.5px solid #969696;border-left:1.5px solid #969696;border-bottom:1px solid #dedede;border-right:1px solid #dedede"></div>
<div style="position:absolute;left:330.70px;top:782.50px;width:59.30px;height:28.00px;background:#d5d5d5;box-sizing:border-box;border-top:1.5px solid #969696;border-left:1.5px solid #969696;border-bottom:1px solid #dedede;border-right:1px solid #dedede"></div>
<div style="position:absolute;left:394.00px;top:782.50px;width:76.40px;height:28.00px;background:#d5d5d5;box-sizing:border-box;border-top:1.5px solid #969696;border-left:1.5px solid #969696;border-bottom:1px solid #dedede;border-right:1px solid #dedede"></div>
<div style="position:absolute;left:473.80px;top:782.50px;width:76.40px;height:28.00px;background:#d5d5d5;box-sizing:border-box;border-top:1.5px solid #969696;border-left:1.5px solid #969696;border-bottom:1px solid #dedede;border-right:1px solid #dedede"></div>
<div style="position:absolute;left:553.80px;top:782.50px;width:96.20px;height:28.00px;background:#d5d5d5;box-sizing:border-box;border-top:1.5px solid #969696;border-left:1.5px solid #969696;border-bottom:1px solid #dedede;border-right:1px solid #dedede"></div>
<div style="position:absolute;left:653.60px;top:782.50px;width:67.40px;height:28.00px;background:#d5d5d5;box-sizing:border-box;border-top:1.5px solid #969696;border-left:1.5px solid #969696;border-bottom:1px solid #dedede;border-right:1px solid #dedede"></div>
<div style="position:absolute;left:725.00px;top:782.50px;width:146.00px;height:28.00px;background:#d5d5d5;box-sizing:border-box;border-top:1.5px solid #969696;border-left:1.5px solid #969696;border-bottom:1px solid #dedede;border-right:1px solid #dedede"></div>
<div style="position:absolute;left:874.40px;top:782.50px;width:63.80px;height:28.00px;background:#d5d5d5;box-sizing:border-box;border-top:1.5px solid #969696;border-left:1.5px solid #969696;border-bottom:1px solid #dedede;border-right:1px solid #dedede"></div>
<div style="position:absolute;left:942.00px;top:782.50px;width:98.00px;height:28.00px;background:#d5d5d5;box-sizing:border-box;border-top:1.5px solid #969696;border-left:1.5px solid #969696;border-bottom:1px solid #dedede;border-right:1px solid #dedede"></div>
<div style="position:absolute;left:330.70px;top:814.10px;width:59.30px;height:27.90px;background:#d5d5d5;box-sizing:border-box;border-top:1.5px solid #969696;border-left:1.5px solid #969696;border-bottom:1px solid #dedede;border-right:1px solid #dedede"></div>
<div style="position:absolute;left:394.00px;top:814.10px;width:76.40px;height:27.90px;background:#d5d5d5;box-sizing:border-box;border-top:1.5px solid #969696;border-left:1.5px solid #969696;border-bottom:1px solid #dedede;border-right:1px solid #dedede"></div>
<div style="position:absolute;left:473.80px;top:814.10px;width:76.40px;height:27.90px;background:#d5d5d5;box-sizing:border-box;border-top:1.5px solid #969696;border-left:1.5px solid #969696;border-bottom:1px solid #dedede;border-right:1px solid #dedede"></div>
<div style="position:absolute;left:553.80px;top:814.10px;width:96.20px;height:27.90px;background:#d5d5d5;box-sizing:border-box;border-top:1.5px solid #969696;border-left:1.5px solid #969696;border-bottom:1px solid #dedede;border-right:1px solid #dedede"></div>
<div style="position:absolute;left:653.60px;top:814.10px;width:67.40px;height:27.90px;background:#d5d5d5;box-sizing:border-box;border-top:1.5px solid #969696;border-left:1.5px solid #969696;border-bottom:1px solid #dedede;border-right:1px solid #dedede"></div>
<div style="position:absolute;left:725.00px;top:814.10px;width:146.00px;height:27.90px;background:#d5d5d5;box-sizing:border-box;border-top:1.5px solid #969696;border-left:1.5px solid #969696;border-bottom:1px solid #dedede;border-right:1px solid #dedede"></div>
<div style="position:absolute;left:874.40px;top:814.10px;width:63.80px;height:27.90px;background:#d5d5d5;box-sizing:border-box;border-top:1.5px solid #969696;border-left:1.5px solid #969696;border-bottom:1px solid #dedede;border-right:1px solid #dedede"></div>
<div style="position:absolute;left:942.00px;top:814.10px;width:98.00px;height:27.90px;background:#d5d5d5;box-sizing:border-box;border-top:1.5px solid #969696;border-left:1.5px solid #969696;border-bottom:1px solid #dedede;border-right:1px solid #dedede"></div>
<div style="position:absolute;left:330.70px;top:845.70px;width:59.30px;height:28.60px;background:#d5d5d5;box-sizing:border-box;border-top:1.5px solid #969696;border-left:1.5px solid #969696;border-bottom:1px solid #dedede;border-right:1px solid #dedede"></div>
<div style="position:absolute;left:394.00px;top:845.70px;width:76.40px;height:28.60px;background:#d5d5d5;box-sizing:border-box;border-top:1.5px solid #969696;border-left:1.5px solid #969696;border-bottom:1px solid #dedede;border-right:1px solid #dedede"></div>
<div style="position:absolute;left:473.80px;top:845.70px;width:76.40px;height:28.60px;background:#d5d5d5;box-sizing:border-box;border-top:1.5px solid #969696;border-left:1.5px solid #969696;border-bottom:1px solid #dedede;border-right:1px solid #dedede"></div>
<div style="position:absolute;left:553.80px;top:845.70px;width:96.20px;height:28.60px;background:#d5d5d5;box-sizing:border-box;border-top:1.5px solid #969696;border-left:1.5px solid #969696;border-bottom:1px solid #dedede;border-right:1px solid #dedede"></div>
<div style="position:absolute;left:653.60px;top:845.70px;width:67.40px;height:28.60px;background:#d5d5d5;box-sizing:border-box;border-top:1.5px solid #969696;border-left:1.5px solid #969696;border-bottom:1px solid #dedede;border-right:1px solid #dedede"></div>
<div style="position:absolute;left:725.00px;top:845.70px;width:146.00px;height:28.60px;background:#d5d5d5;box-sizing:border-box;border-top:1.5px solid #969696;border-left:1.5px solid #969696;border-bottom:1px solid #dedede;border-right:1px solid #dedede"></div>
<div style="position:absolute;left:874.40px;top:845.70px;width:63.80px;height:28.60px;background:#d5d5d5;box-sizing:border-box;border-top:1.5px solid #969696;border-left:1.5px solid #969696;border-bottom:1px solid #dedede;border-right:1px solid #dedede"></div>
<div style="position:absolute;left:942.00px;top:845.70px;width:98.00px;height:28.60px;background:#d5d5d5;box-sizing:border-box;border-top:1.5px solid #969696;border-left:1.5px solid #969696;border-bottom:1px solid #dedede;border-right:1px solid #dedede"></div>
<div style="position:absolute;left:330.70px;top:878.10px;width:59.30px;height:29.00px;background:#d5d5d5;box-sizing:border-box;border-top:1.5px solid #969696;border-left:1.5px solid #969696;border-bottom:1px solid #dedede;border-right:1px solid #dedede"></div>
<div style="position:absolute;left:394.00px;top:878.10px;width:76.40px;height:29.00px;background:#d5d5d5;box-sizing:border-box;border-top:1.5px solid #969696;border-left:1.5px solid #969696;border-bottom:1px solid #dedede;border-right:1px solid #dedede"></div>
<div style="position:absolute;left:473.80px;top:878.10px;width:76.40px;height:29.00px;background:#d5d5d5;box-sizing:border-box;border-top:1.5px solid #969696;border-left:1.5px solid #969696;border-bottom:1px solid #dedede;border-right:1px solid #dedede"></div>
<div style="position:absolute;left:553.80px;top:878.10px;width:96.20px;height:29.00px;background:#d5d5d5;box-sizing:border-box;border-top:1.5px solid #969696;border-left:1.5px solid #969696;border-bottom:1px solid #dedede;border-right:1px solid #dedede"></div>
<div style="position:absolute;left:653.60px;top:878.10px;width:67.40px;height:29.00px;background:#d5d5d5;box-sizing:border-box;border-top:1.5px solid #969696;border-left:1.5px solid #969696;border-bottom:1px solid #dedede;border-right:1px solid #dedede"></div>
<div style="position:absolute;left:725.00px;top:878.10px;width:146.00px;height:29.00px;background:#d5d5d5;box-sizing:border-box;border-top:1.5px solid #969696;border-left:1.5px solid #969696;border-bottom:1px solid #dedede;border-right:1px solid #dedede"></div>
<div style="position:absolute;left:874.40px;top:878.10px;width:63.80px;height:29.00px;background:#d5d5d5;box-sizing:border-box;border-top:1.5px solid #969696;border-left:1.5px solid #969696;border-bottom:1px solid #dedede;border-right:1px solid #dedede"></div>
<div style="position:absolute;left:942.00px;top:878.10px;width:98.00px;height:29.00px;background:#d5d5d5;box-sizing:border-box;border-top:1.5px solid #969696;border-left:1.5px solid #969696;border-bottom:1px solid #dedede;border-right:1px solid #dedede"></div>
<div style="position:absolute;left:330.70px;top:911.90px;width:709.30px;height:23.60px;background:#d5d5d5;box-sizing:border-box;border-top:1.5px solid #969696;border-left:1.5px solid #969696;border-bottom:1px solid #dedede;border-right:1px solid #dedede"></div>
<div class="t" style="position:absolute;left:336.30px;top:724.93px;width:1200px;white-space:nowrap;line-height:15.6px;font-size:15.6px;font-family:'Liberation Serif', serif;font-weight:700;color:#111;text-align:left;transform:scaleX(1.0517);transform-origin:0 0;-webkit-text-stroke:0.25px #111;">Region</div>
<div class="t" style="position:absolute;left:398.80px;top:724.93px;width:1200px;white-space:nowrap;line-height:15.6px;font-size:15.6px;font-family:'Liberation Serif', serif;font-weight:700;color:#111;text-align:left;transform:scaleX(0.9634);transform-origin:0 0;-webkit-text-stroke:0.25px #111;">Analy ·iæ)</div>
<div class="t" style="position:absolute;left:480.50px;top:724.93px;width:1200px;white-space:nowrap;line-height:15.6px;font-size:15.6px;font-family:'Liberation Serif', serif;font-weight:700;color:#111;text-align:left;transform:scaleX(1.0382);transform-origin:0 0;-webkit-text-stroke:0.25px #111;">BMC (g)</div>
<div class="t" style="position:absolute;left:562.50px;top:724.93px;width:1200px;white-space:nowrap;line-height:15.6px;font-size:15.6px;font-family:'Liberation Serif', serif;font-weight:700;color:#111;text-align:left;transform:scaleX(1.0064);transform-origin:0 0;-webkit-text-stroke:0.25px #111;">BMD(g/cm²)</div>
<div class="t" style="position:absolute;left:661.50px;top:724.93px;width:1200px;white-space:nowrap;line-height:15.6px;font-size:15.6px;font-family:'Liberation Serif', serif;font-weight:700;color:#111;text-align:left;transform:scaleX(1.0605);transform-origin:0 0;-webkit-text-stroke:0.25px #111;">T-Score</div>
<div class="t" style="position:absolute;left:728.90px;top:724.93px;width:1200px;white-space:nowrap;line-height:15.6px;font-size:15.6px;font-family:'Liberation Serif', serif;font-weight:700;color:#111;text-align:left;transform:scaleX(1.0095);transform-origin:0 0;-webkit-text-stroke:0.25px #111;">PR (Peak Reference)</div>
<div class="t" style="position:absolute;left:880.30px;top:724.93px;width:1200px;white-space:nowrap;line-height:15.6px;font-size:15.6px;font-family:'Liberation Serif', serif;font-weight:700;color:#111;text-align:left;transform:scaleX(1.0687);transform-origin:0 0;-webkit-text-stroke:0.25px #111;">Z.score</div>
<div class="t" style="position:absolute;left:944.80px;top:724.93px;width:1200px;white-space:nowrap;line-height:15.6px;font-size:15.6px;font-family:'Liberation Serif', serif;font-weight:700;color:#111;text-align:left;-webkit-text-stroke:0.25px #111;">AM (Age Matched)</div>
<div class="t" style="position:absolute;left:336.30px;top:757.85px;width:1200px;white-space:nowrap;line-height:16px;font-size:16px;font-family:'Liberation Serif', serif;font-weight:400;color:#111;text-align:left;-webkit-text-stroke:0.25px #111;">L1</div>
<div class="t" style="position:absolute;left:-736.30px;top:757.51px;width:1200px;white-space:nowrap;line-height:16.4px;font-size:16.4px;font-family:'Liberation Serif', serif;font-weight:400;color:#111;text-align:right;-webkit-text-stroke:0.25px #111;">18.73</div>
<div class="t" style="position:absolute;left:-658.00px;top:757.51px;width:1200px;white-space:nowrap;line-height:16.4px;font-size:16.4px;font-family:'Liberation Serif', serif;font-weight:400;color:#111;text-align:right;-webkit-text-stroke:0.25px #111;">9.87</div>
<div class="t" style="position:absolute;left:-555.40px;top:757.51px;width:1200px;white-space:nowrap;line-height:16.4px;font-size:16.4px;font-family:'Liberation Serif', serif;font-weight:400;color:#111;text-align:right;-webkit-text-stroke:0.25px #111;">0.776</div>
<div class="t" style="position:absolute;left:-485.00px;top:757.51px;width:1200px;white-space:nowrap;line-height:16.4px;font-size:16.4px;font-family:'Liberation Serif', serif;font-weight:400;color:#111;text-align:right;-webkit-text-stroke:0.25px #111;">-2.5</div>
<div class="t" style="position:absolute;left:-336.00px;top:757.51px;width:1200px;white-space:nowrap;line-height:16.4px;font-size:16.4px;font-family:'Liberation Serif', serif;font-weight:400;color:#111;text-align:right;-webkit-text-stroke:0.25px #111;">71</div>
<div class="t" style="position:absolute;left:-267.70px;top:757.51px;width:1200px;white-space:nowrap;line-height:16.4px;font-size:16.4px;font-family:'Liberation Serif', serif;font-weight:400;color:#111;text-align:right;-webkit-text-stroke:0.25px #111;">-2.4</div>
<div class="t" style="position:absolute;left:336.30px;top:789.70px;width:1200px;white-space:nowrap;line-height:16px;font-size:16px;font-family:'Liberation Serif', serif;font-weight:400;color:#111;text-align:left;-webkit-text-stroke:0.25px #111;">L2</div>
<div class="t" style="position:absolute;left:-736.30px;top:789.37px;width:1200px;white-space:nowrap;line-height:16.4px;font-size:16.4px;font-family:'Liberation Serif', serif;font-weight:400;color:#111;text-align:right;-webkit-text-stroke:0.25px #111;">13.72</div>
<div class="t" style="position:absolute;left:-658.00px;top:789.37px;width:1200px;white-space:nowrap;line-height:16.4px;font-size:16.4px;font-family:'Liberation Serif', serif;font-weight:400;color:#111;text-align:right;-webkit-text-stroke:0.25px #111;">10.92</div>
<div class="t" style="position:absolute;left:-555.40px;top:789.37px;width:1200px;white-space:nowrap;line-height:16.4px;font-size:16.4px;font-family:'Liberation Serif', serif;font-weight:400;color:#111;text-align:right;-webkit-text-stroke:0.25px #111;">0.796</div>
<div class="t" style="position:absolute;left:-485.00px;top:789.37px;width:1200px;white-space:nowrap;line-height:16.4px;font-size:16.4px;font-family:'Liberation Serif', serif;font-weight:400;color:#111;text-align:right;-webkit-text-stroke:0.25px #111;">-2.2</div>
<div class="t" style="position:absolute;left:-336.00px;top:789.37px;width:1200px;white-space:nowrap;line-height:16.4px;font-size:16.4px;font-family:'Liberation Serif', serif;font-weight:400;color:#111;text-align:right;-webkit-text-stroke:0.25px #111;">71</div>
<div class="t" style="position:absolute;left:-267.70px;top:789.37px;width:1200px;white-space:nowrap;line-height:16.4px;font-size:16.4px;font-family:'Liberation Serif', serif;font-weight:400;color:#111;text-align:right;-webkit-text-stroke:0.25px #111;">-2.2</div>
<div class="t" style="position:absolute;left:336.30px;top:821.55px;width:1200px;white-space:nowrap;line-height:16px;font-size:16px;font-family:'Liberation Serif', serif;font-weight:400;color:#111;text-align:left;-webkit-text-stroke:0.25px #111;">L3</div>
<div class="t" style="position:absolute;left:-736.30px;top:821.22px;width:1200px;white-space:nowrap;line-height:16.4px;font-size:16.4px;font-family:'Liberation Serif', serif;font-weight:400;color:#111;text-align:right;-webkit-text-stroke:0.25px #111;">13.02</div>
<div class="t" style="position:absolute;left:-658.00px;top:821.22px;width:1200px;white-space:nowrap;line-height:16.4px;font-size:16.4px;font-family:'Liberation Serif', serif;font-weight:400;color:#111;text-align:right;-webkit-text-stroke:0.25px #111;">11.33</div>
<div class="t" style="position:absolute;left:-555.40px;top:821.22px;width:1200px;white-space:nowrap;line-height:16.4px;font-size:16.4px;font-family:'Liberation Serif', serif;font-weight:400;color:#111;text-align:right;-webkit-text-stroke:0.25px #111;">0.585</div>
<div class="t" style="position:absolute;left:-485.00px;top:821.22px;width:1200px;white-space:nowrap;line-height:16.4px;font-size:16.4px;font-family:'Liberation Serif', serif;font-weight:400;color:#111;text-align:right;-webkit-text-stroke:0.25px #111;">-1.8</div>
<div class="t" style="position:absolute;left:-336.00px;top:821.22px;width:1200px;white-space:nowrap;line-height:16.4px;font-size:16.4px;font-family:'Liberation Serif', serif;font-weight:400;color:#111;text-align:right;-webkit-text-stroke:0.25px #111;">81</div>
<div class="t" style="position:absolute;left:-267.70px;top:821.22px;width:1200px;white-space:nowrap;line-height:16.4px;font-size:16.4px;font-family:'Liberation Serif', serif;font-weight:400;color:#111;text-align:right;-webkit-text-stroke:0.25px #111;">-1.5</div>
<div class="t" style="position:absolute;left:336.30px;top:853.40px;width:1200px;white-space:nowrap;line-height:16px;font-size:16px;font-family:'Liberation Serif', serif;font-weight:400;color:#111;text-align:left;-webkit-text-stroke:0.25px #111;">L4</div>
<div class="t" style="position:absolute;left:-736.30px;top:853.06px;width:1200px;white-space:nowrap;line-height:16.4px;font-size:16.4px;font-family:'Liberation Serif', serif;font-weight:400;color:#111;text-align:right;-webkit-text-stroke:0.25px #111;">13.40</div>
<div class="t" style="position:absolute;left:-658.00px;top:853.06px;width:1200px;white-space:nowrap;line-height:16.4px;font-size:16.4px;font-family:'Liberation Serif', serif;font-weight:400;color:#111;text-align:right;-webkit-text-stroke:0.25px #111;">13.35</div>
<div class="t" style="position:absolute;left:-555.40px;top:853.06px;width:1200px;white-space:nowrap;line-height:16.4px;font-size:16.4px;font-family:'Liberation Serif', serif;font-weight:400;color:#111;text-align:right;-webkit-text-stroke:0.25px #111;">1.039</div>
<div class="t" style="position:absolute;left:-485.00px;top:853.06px;width:1200px;white-space:nowrap;line-height:16.4px;font-size:16.4px;font-family:'Liberation Serif', serif;font-weight:400;color:#111;text-align:right;-webkit-text-stroke:0.25px #111;">-1.4</div>
<div class="t" style="position:absolute;left:-336.00px;top:853.06px;width:1200px;white-space:nowrap;line-height:16.4px;font-size:16.4px;font-family:'Liberation Serif', serif;font-weight:400;color:#111;text-align:right;-webkit-text-stroke:0.25px #111;">92</div>
<div class="t" style="position:absolute;left:-267.70px;top:853.06px;width:1200px;white-space:nowrap;line-height:16.4px;font-size:16.4px;font-family:'Liberation Serif', serif;font-weight:400;color:#111;text-align:right;-webkit-text-stroke:0.25px #111;">-1.1</div>
<div class="t" style="position:absolute;left:336.30px;top:886.55px;width:1200px;white-space:nowrap;line-height:16px;font-size:16px;font-family:'Liberation Serif', serif;font-weight:700;color:#111;text-align:left;transform:scaleX(0.9420);transform-origin:0 0;-webkit-text-stroke:0.25px #111;">TOTAL</div>
<div class="t" style="position:absolute;left:-736.30px;top:886.21px;width:1200px;white-space:nowrap;line-height:16.4px;font-size:16.4px;font-family:'Liberation Serif', serif;font-weight:400;color:#111;text-align:right;-webkit-text-stroke:0.5px #111;">52.87</div>
<div class="t" style="position:absolute;left:-658.00px;top:886.21px;width:1200px;white-space:nowrap;line-height:16.4px;font-size:16.4px;font-family:'Liberation Serif', serif;font-weight:400;color:#111;text-align:right;-webkit-text-stroke:0.5px #111;">46.24</div>
<div class="t" style="position:absolute;left:-555.40px;top:886.21px;width:1200px;white-space:nowrap;line-height:16.4px;font-size:16.4px;font-family:'Liberation Serif', serif;font-weight:400;color:#111;text-align:right;-webkit-text-stroke:0.5px #111;">0.875</div>
<div class="t" style="position:absolute;left:-485.00px;top:886.21px;width:1200px;white-space:nowrap;line-height:16.4px;font-size:16.4px;font-family:'Liberation Serif', serif;font-weight:400;color:#111;text-align:right;-webkit-text-stroke:0.5px #111;">-2.0</div>
<div class="t" style="position:absolute;left:-336.00px;top:886.21px;width:1200px;white-space:nowrap;line-height:16.4px;font-size:16.4px;font-family:'Liberation Serif', serif;font-weight:400;color:#111;text-align:right;-webkit-text-stroke:0.5px #111;">79</div>
<div class="t" style="position:absolute;left:-267.70px;top:886.21px;width:1200px;white-space:nowrap;line-height:16.4px;font-size:16.4px;font-family:'Liberation Serif', serif;font-weight:400;color:#111;text-align:right;-webkit-text-stroke:0.5px #111;">-1.8</div>
<div class="t" style="position:absolute;left:332.40px;top:917.79px;width:1200px;white-space:nowrap;line-height:14.7px;font-size:14.7px;font-family:'Liberation Serif', serif;font-weight:400;color:#111;text-align:left;transform:scaleX(1.0138);transform-origin:0 0;-webkit-text-stroke:0.25px #111;">Teaal 1.2 – 1.0), D C:m (VS = 1.244, BCV = 1.048 S, TH – 8.823</div>
<div class="t" style="position:absolute;left:327.80px;top:950.31px;width:1200px;white-space:nowrap;line-height:13.6px;font-size:13.6px;font-family:'Liberation Serif', serif;font-weight:400;color:#f0f0f0;text-align:left;transform:scaleX(0.9951);transform-origin:0 0;-webkit-text-stroke:0.35px #f0f0f0;">T-score refereticce : Whtile Mornam (MIANES TI)) Reference)</div>
<div class="t" style="position:absolute;left:327.80px;top:988.91px;width:1200px;white-space:nowrap;line-height:14.2px;font-size:14.2px;font-family:'Liberation Serif', serif;font-weight:400;color:#f0f0f0;text-align:left;transform:scaleX(1.0812);transform-origin:0 0;-webkit-text-stroke:0.35px #f0f0f0;">Fractuse Rak: Incressed: WHO Classifeation: Osteoporosis</div>
</body></html>
